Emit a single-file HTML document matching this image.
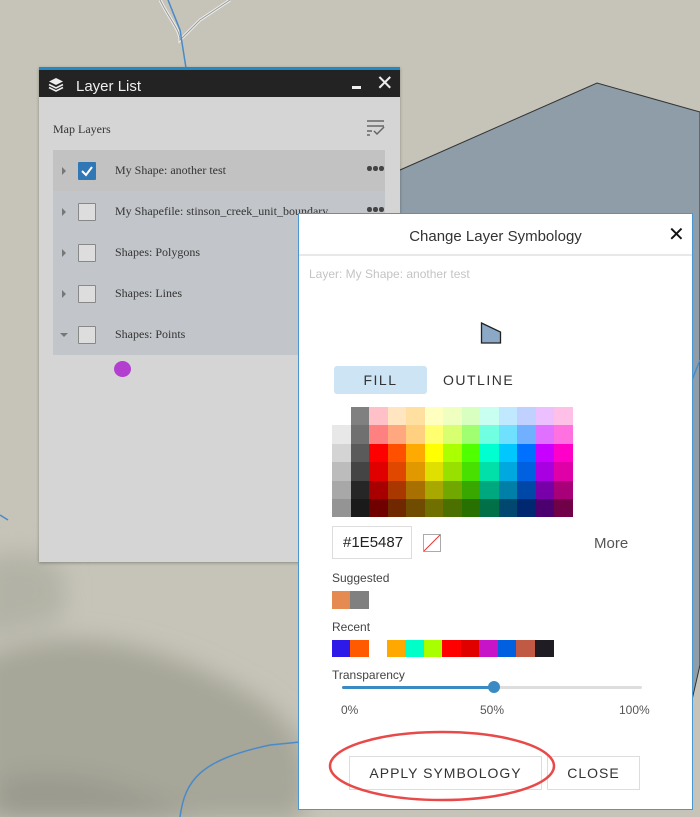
<!DOCTYPE html>
<html><head><meta charset="utf-8"><style>
*{box-sizing:border-box;margin:0;padding:0}
body{width:700px;height:817px;overflow:hidden;position:relative;background:#c6c4b8;font-family:"Liberation Sans",sans-serif}
.abs{position:absolute}
.serif{font-family:"Liberation Serif",serif}
.row{position:absolute;left:53px;width:332px;height:41px;background:#c2c5c9}
.row .tri{position:absolute;left:9px;top:17px;width:0;height:0;border-left:4px solid #777;border-top:4px solid transparent;border-bottom:4px solid transparent}
.row .cb{position:absolute;left:25px;top:12px;width:18px;height:18px;border:1px solid #888;background:#ddd;border-radius:1px}
.row .t{position:absolute;left:62px;top:13px;font-size:12px;color:#333;font-family:"Liberation Serif",serif}
.row .dots{position:absolute;right:1px;top:16px;width:17px;height:5px}
.row .dots i{position:absolute;top:0;width:4.5px;height:4.5px;border-radius:50%;background:#444}
.grid{position:absolute;left:332px;top:407px;display:grid;grid-template-columns:repeat(13,18.5px);grid-auto-rows:18.4px}
.sw{position:absolute;top:0;height:17px;width:18.5px}
</style></head><body>
<svg class="abs" style="left:0;top:0" width="700" height="817">
<defs><filter id="b"><feGaussianBlur stdDeviation="12"/></filter></defs>
<g filter="url(#b)">
<path d="M-20 660 C60 620 160 640 260 700 C300 730 320 760 300 820 L-20 820Z" fill="#a6a699"/>
<path d="M-20 560 C40 540 80 560 60 620 L-20 640Z" fill="#b2b2a6"/>
<path d="M0 780 C80 760 160 800 200 820 L0 820Z" fill="#9a9a8e"/>
</g>
<polygon points="400,170 597,83 700,112 700,665 692,700 300,700 300,200" fill="#8e9da8" stroke="#333" stroke-width="1"/>
<path d="M160 0 C170 20 180 30 180 40 L200 20 L230 0" fill="none" stroke="#eee" stroke-width="3"/>
<path d="M160 0 C170 20 180 30 180 40 L200 20 L230 0" fill="none" stroke="#999" stroke-width="1"/>
<path d="M168 0 L180 30 L186 68" fill="none" stroke="#4a8ac8" stroke-width="1.5"/>
<path d="M180 817 C185 780 200 760 270 745 L300 742" fill="none" stroke="#4a8ac8" stroke-width="1.5"/>
<path d="M0 515 L8 520" fill="none" stroke="#4a8ac8" stroke-width="1.5"/>
<path d="M692 380 L700 360" fill="none" stroke="#4a8ac8" stroke-width="1.5"/>
</svg>

<div class="abs" style="left:39px;top:67px;width:361px;height:495px;background:#d5d5d5;box-shadow:0 1px 3px rgba(0,0,0,.3)">
 <div class="abs" style="left:0;top:0;width:361px;height:3px;background:#1e8ac8"></div>
 <div class="abs" style="left:0;top:3px;width:361px;height:27px;background:#232323;color:#eee">
  <svg class="abs" style="left:9px;top:7px" width="16" height="15" viewBox="0 0 16 15"><path d="M8 1 L15 4.5 L8 8 L1 4.5Z" fill="#eee"/><path d="M1 7.5 L8 11 L15 7.5" fill="none" stroke="#eee" stroke-width="1.6"/><path d="M1 10.5 L8 14 L15 10.5" fill="none" stroke="#eee" stroke-width="1.6"/></svg>
  <div class="abs" style="left:37px;top:8px;font-size:15px">Layer List</div>
  <div class="abs" style="left:313px;top:16px;width:9px;height:3px;background:#eee"></div>
  <div class="abs" style="left:337px;top:1px;font-size:21px">✕</div>
 </div>
 <div class="abs serif" style="left:14px;top:55px;font-size:12px;color:#333">Map Layers</div>
 <svg class="abs" style="left:327px;top:52px" width="20" height="18"><path d="M1 2H18M1 7H18M1 12H6M1 16H4" stroke="#666" stroke-width="1.5"/><path d="M8 12 L11 15 L18 8" fill="none" stroke="#666" stroke-width="1.5"/></svg>
</div>
<div class="row" style="top:150px;background:#c2c2c2"><div class="tri"></div><div class="cb" style="background:#2f77b5;border-color:#2f77b5"><svg width="16" height="16" style="position:absolute;left:0;top:0"><path d="M3 8 L7 12 L13 4" fill="none" stroke="#fff" stroke-width="2"/></svg></div><div class="t">My Shape: another test</div><div class="dots"><i style="left:0"></i><i style="left:6px"></i><i style="left:12px"></i></div></div>
<div class="row" style="top:191px"><div class="tri"></div><div class="cb"></div><div class="t">My Shapefile: stinson_creek_unit_boundary</div><div class="dots"><i style="left:0"></i><i style="left:6px"></i><i style="left:12px"></i></div></div>
<div class="row" style="top:232px"><div class="tri"></div><div class="cb"></div><div class="t">Shapes: Polygons</div></div>
<div class="row" style="top:273px"><div class="tri"></div><div class="cb"></div><div class="t">Shapes: Lines</div></div>
<div class="row" style="top:314px;height:41px"><div class="tri" style="left:7px;top:19px;border-left:4px solid transparent;border-right:4px solid transparent;border-top:4px solid #777;border-bottom:0"></div><div class="cb"></div><div class="t">Shapes: Points</div></div>
<div class="abs" style="left:114px;top:361px;width:17px;height:16px;border-radius:50%;background:#b23fd0"></div>

<div class="abs" style="left:298px;top:213px;width:395px;height:597px;background:#fff;border:1px solid #4a96d0">
 <div class="abs" style="left:0;top:14px;width:393px;text-align:center;font-size:15px;color:#333">Change Layer Symbology</div>
 <div class="abs" style="left:369px;top:8px;font-size:20px;color:#111">✕</div>
 <div class="abs" style="left:0;top:40px;width:393px;height:2px;background:#e8e8e8"></div>
 <div class="abs" style="left:10px;top:53px;font-size:12px;color:#c4c4c4">Layer: My Shape: another test</div>
 <svg class="abs" style="left:181px;top:107px" width="24" height="24"><path d="M1.5 2 L20.5 11 L20.5 22 L1.5 22Z" fill="#8ba8c6" stroke="#222" stroke-width="1.3"/></svg>
 <div class="abs" style="left:35px;top:152px;width:93px;height:28px;background:#cde4f5;border-radius:3px;text-align:center;line-height:28px;font-size:14px;letter-spacing:1.5px;color:#333">FILL</div>
 <div class="abs" style="left:144px;top:152px;line-height:28px;font-size:14px;letter-spacing:1.5px;color:#333">OUTLINE</div>
 <div class="abs" style="left:33px;top:312px;width:80px;height:33px;border:1px solid #ddd;font-size:15px;line-height:31px;padding-left:10px;color:#222">#1E5487</div>
 <svg class="abs" style="left:124px;top:320px" width="18" height="18"><rect x=".5" y=".5" width="17" height="17" fill="#fff" stroke="#aaa"/><path d="M1 17 L17 1" stroke="#e33" stroke-width="1"/></svg>
 <div class="abs" style="left:295px;top:321px;font-size:15px;color:#555">More</div>
 <div class="abs" style="left:33px;top:357px;font-size:12px;color:#444">Suggested</div>
 <div class="abs" style="left:33px;top:377px;width:18px;height:18px;background:#e58b51"></div>
 <div class="abs" style="left:51px;top:377px;width:19px;height:18px;background:#808080"></div>
 <div class="abs" style="left:33px;top:406px;font-size:12px;color:#444">Recent</div>
 <div class="abs" style="left:33px;top:426px;width:240px;height:18px">
  <div class="sw" style="left:0;background:#2d1ae8"></div>
  <div class="sw" style="left:18px;background:#ff5a00"></div>
  <div class="sw" style="left:55px;background:#ffa800"></div>
  <div class="sw" style="left:73px;background:#00ffc8"></div>
  <div class="sw" style="left:92px;background:#a8ff00"></div>
  <div class="sw" style="left:110px;background:#ff0000"></div>
  <div class="sw" style="left:129px;background:#e00000"></div>
  <div class="sw" style="left:147px;background:#c814c8"></div>
  <div class="sw" style="left:166px;background:#0060e0"></div>
  <div class="sw" style="left:184px;background:#c05a44"></div>
  <div class="sw" style="left:203px;background:#201c24"></div>
 </div>
 <div class="abs" style="left:33px;top:454px;font-size:12px;color:#444">Transparency</div>
 <div class="abs" style="left:43px;top:472px;width:300px;height:3px;background:#ddd;border-radius:2px"></div>
 <div class="abs" style="left:43px;top:472px;width:152px;height:3px;background:#3a8ac4;border-radius:2px"></div>
 <div class="abs" style="left:189px;top:467px;width:12px;height:12px;border-radius:50%;background:#3a8ac4"></div>
 <div class="abs" style="left:42px;top:489px;font-size:12px;color:#555">0%</div>
 <div class="abs" style="left:181px;top:489px;font-size:12px;color:#555">50%</div>
 <div class="abs" style="left:320px;top:489px;font-size:12px;color:#555">100%</div>
 <div class="abs" style="left:50px;top:542px;width:193px;height:34px;border:1px solid #ddd;text-align:center;line-height:32px;font-size:14px;letter-spacing:1px;color:#333">APPLY SYMBOLOGY</div>
 <div class="abs" style="left:248px;top:542px;width:93px;height:34px;border:1px solid #ddd;text-align:center;line-height:32px;font-size:14px;letter-spacing:1px;color:#333">CLOSE</div>
</div>
<svg class="abs" style="left:325px;top:728px" width="235" height="78"><ellipse cx="117" cy="38" rx="112" ry="34" fill="none" stroke="#e84a4a" stroke-width="2.5"/></svg>

<div class="grid">
<div></div><div style="background:#808080"></div><div style="background:#ffc0c8"></div><div style="background:#ffe6c0"></div><div style="background:#ffe0a0"></div><div style="background:#ffffc0"></div><div style="background:#eeffc0"></div><div style="background:#d8ffc0"></div><div style="background:#c8fff0"></div><div style="background:#c0e8ff"></div><div style="background:#c0d0ff"></div><div style="background:#ecc0ff"></div><div style="background:#ffc0e8"></div>
<div style="background:#e8e8e8"></div><div style="background:#707070"></div><div style="background:#ff8080"></div><div style="background:#ffa880"></div><div style="background:#ffd080"></div><div style="background:#ffff70"></div><div style="background:#d8ff70"></div><div style="background:#a0ff70"></div><div style="background:#70ffe0"></div><div style="background:#70e0ff"></div><div style="background:#70b0ff"></div><div style="background:#e070ff"></div><div style="background:#ff70e0"></div>
<div style="background:#d4d4d4"></div><div style="background:#5a5a5a"></div><div style="background:#ff0000"></div><div style="background:#ff5000"></div><div style="background:#ffaa00"></div><div style="background:#ffff00"></div><div style="background:#aaff00"></div><div style="background:#50ff00"></div><div style="background:#00ffd0"></div><div style="background:#00c8ff"></div><div style="background:#0070ff"></div><div style="background:#c800ff"></div><div style="background:#ff00c8"></div>
<div style="background:#bcbcbc"></div><div style="background:#444444"></div><div style="background:#e00000"></div><div style="background:#e04800"></div><div style="background:#e09a00"></div><div style="background:#e0e000"></div><div style="background:#98e000"></div><div style="background:#48e000"></div><div style="background:#00e0a8"></div><div style="background:#00a8e0"></div><div style="background:#0060e0"></div><div style="background:#a800e0"></div><div style="background:#e000a8"></div>
<div style="background:#a8a8a8"></div><div style="background:#262626"></div><div style="background:#a80000"></div><div style="background:#a83800"></div><div style="background:#a87000"></div><div style="background:#a8a800"></div><div style="background:#70a800"></div><div style="background:#38a800"></div><div style="background:#00a880"></div><div style="background:#0080a8"></div><div style="background:#0048a8"></div><div style="background:#7800a8"></div><div style="background:#a80078"></div>
<div style="background:#949494"></div><div style="background:#1a1a1a"></div><div style="background:#700000"></div><div style="background:#702800"></div><div style="background:#704c00"></div><div style="background:#707000"></div><div style="background:#4c7000"></div><div style="background:#287000"></div><div style="background:#007048"></div><div style="background:#004870"></div><div style="background:#002870"></div><div style="background:#4c0070"></div><div style="background:#700048"></div>
</div>
</body></html>
